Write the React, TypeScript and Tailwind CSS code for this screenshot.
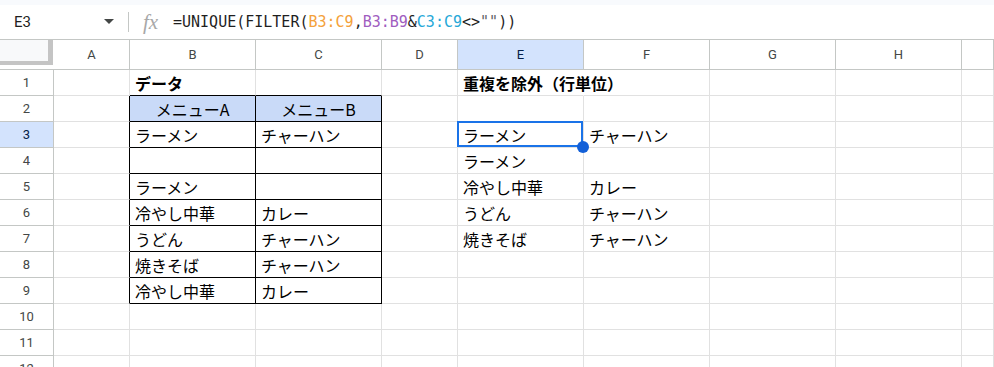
import React from "react";

type CellData = { t?: string; bold?: boolean; center?: boolean };

const colW = ["w-[76px]", "w-[126px]", "w-[126px]", "w-[76px]", "w-[126px]", "w-[126px]", "w-[126px]", "w-[126px]", "flex-1"];
const colNames = ["A", "B", "C", "D", "E", "F", "G", "H", ""];

const data: Record<number, Record<number, CellData>> = {
  1: { 1: { t: "データ", bold: true }, 4: { t: "重複を除外（行単位）", bold: true } },
  2: { 1: { t: "メニューA", center: true }, 2: { t: "メニューB", center: true } },
  3: { 1: { t: "ラーメン" }, 2: { t: "チャーハン" }, 4: { t: "ラーメン" }, 5: { t: "チャーハン" } },
  4: { 4: { t: "ラーメン" } },
  5: { 1: { t: "ラーメン" }, 4: { t: "冷やし中華" }, 5: { t: "カレー" } },
  6: { 1: { t: "冷やし中華" }, 2: { t: "カレー" }, 4: { t: "うどん" }, 5: { t: "チャーハン" } },
  7: { 1: { t: "うどん" }, 2: { t: "チャーハン" }, 4: { t: "焼きそば" }, 5: { t: "チャーハン" } },
  8: { 1: { t: "焼きそば" }, 2: { t: "チャーハン" } },
  9: { 1: { t: "冷やし中華" }, 2: { t: "カレー" } },
};

function Cell({ row, col }: { row: number; col: number }) {
  const d = data[row]?.[col];
  const inTable = row >= 2 && row <= 9;
  let rightCls = "border-r-[#e1e1e1]";
  let bottomCls = "border-b-[#e1e1e1]";
  if (inTable && (col === 0 || col === 1 || col === 2)) rightCls = "border-r-black";
  if (row >= 1 && row <= 9 && (col === 1 || col === 2)) bottomCls = "border-b-black";
  if (row === 1 && col === 4) rightCls = "border-r-white";
  const header = row === 2 && (col === 1 || col === 2);
  const selected = row === 3 && col === 4;
  return (
    <div
      className={`${colW[col]} shrink-0 h-[26px] border-r border-b ${rightCls} ${bottomCls} relative flex items-center ${
        d?.center ? "justify-center" : "justify-start"
      } px-[5px] ${header ? "bg-[#c9daf8]" : ""} ${selected ? "z-10" : ""}`}
    >
      {d?.t && (
        <span
          className={`whitespace-nowrap text-[16px] leading-none text-black ${d.bold ? "font-bold" : ""}`}
          style={{ fontFamily: '"Noto Sans CJK JP", "Noto Sans", sans-serif' }}
        >
          {d.t}
        </span>
      )}
      {selected && (
        <>
          <div className="absolute left-[-1px] top-[-1px] right-0 bottom-0 border-2 border-[#1a73e8] pointer-events-none" />
          <div className="absolute right-[-6px] bottom-[-6px] w-[12px] h-[12px] rounded-full bg-[#1360d8]" />
        </>
      )}
    </div>
  );
}

export default function App() {
  const rows = Array.from({ length: 12 }, (_, i) => i + 1);
  return (
    <div
      className="w-[994px] h-[367px] overflow-hidden bg-white"
      style={{ fontFamily: 'Roboto, "Liberation Sans", Arial, sans-serif' }}
    >
      <div className="h-[5px] bg-[#f8fafd]" />
      {/* formula bar */}
      <div className="h-[35px] flex items-center border-b border-[#c4c7c5] bg-white">
        <div className="w-[128px] shrink-0 flex items-center pl-[14px] pr-[14px] justify-between">
          <span className="text-[15px] text-[#1f1f1f]">E3</span>
          <svg width="10" height="6" viewBox="0 0 10 6">
            <path d="M0 0 L10 0 L5 5 Z" fill="#444746" />
          </svg>
        </div>
        <div className="w-px h-[20px] bg-[#c4c7c5]" />
        <span
          className="ml-[14px] w-[21px] text-[21px] italic text-[#a8a8a8] leading-none"
          style={{ fontFamily: '"Liberation Serif", "DejaVu Serif", serif' }}
        >
          fx
        </span>
        <span
          className="ml-[9px] text-[15px] text-[#1f1f1f] whitespace-pre"
          style={{ fontFamily: '"DejaVu Sans Mono", "Liberation Mono", monospace' }}
        >
          =UNIQUE(FILTER(
          <span className="text-[#f4a13a]">B3:C9</span>,
          <span className="text-[#a05dbf]">B3:B9</span>&amp;
          <span className="text-[#26a8d8]">C3:C9</span>
          {"<>"}
          <span className="text-[#5f6368]">""</span>))
        </span>
      </div>
      {/* column headers */}
      <div className="flex h-[30px] border-b border-[#c4c7c5]">
        <div className="w-[54px] shrink-0 h-full relative">
          <div className="w-[53px] h-[25px] bg-[#f8f9fa] border-r-[5px] border-b-[4px] border-[#c4c4c4]" />
        </div>
        {colNames.map((n, i) => (
          <div
            key={i}
            className={`${colW[i]} shrink-0 h-full border-r border-[#c4c7c5] flex items-center justify-center text-[13px] ${
              i === 4 ? "bg-[#d3e3fd] text-[#041e49]" : "text-[#444746]"
            }`}
          >
            {n}
          </div>
        ))}
      </div>
      {/* rows */}
      {rows.map((r) => (
        <div key={r} className="flex">
          <div
            className={`w-[54px] shrink-0 h-[26px] border-r border-r-[#c4c7c5] border-b border-b-[#c4c7c5] flex items-center justify-center text-[13px] ${
              r === 3 ? "bg-[#d3e3fd] text-[#041e49]" : "text-[#444746]"
            }`}
          >
            {r}
          </div>
          {colW.map((_, c) => (
            <Cell key={c} row={r} col={c} />
          ))}
        </div>
      ))}
    </div>
  );
}
